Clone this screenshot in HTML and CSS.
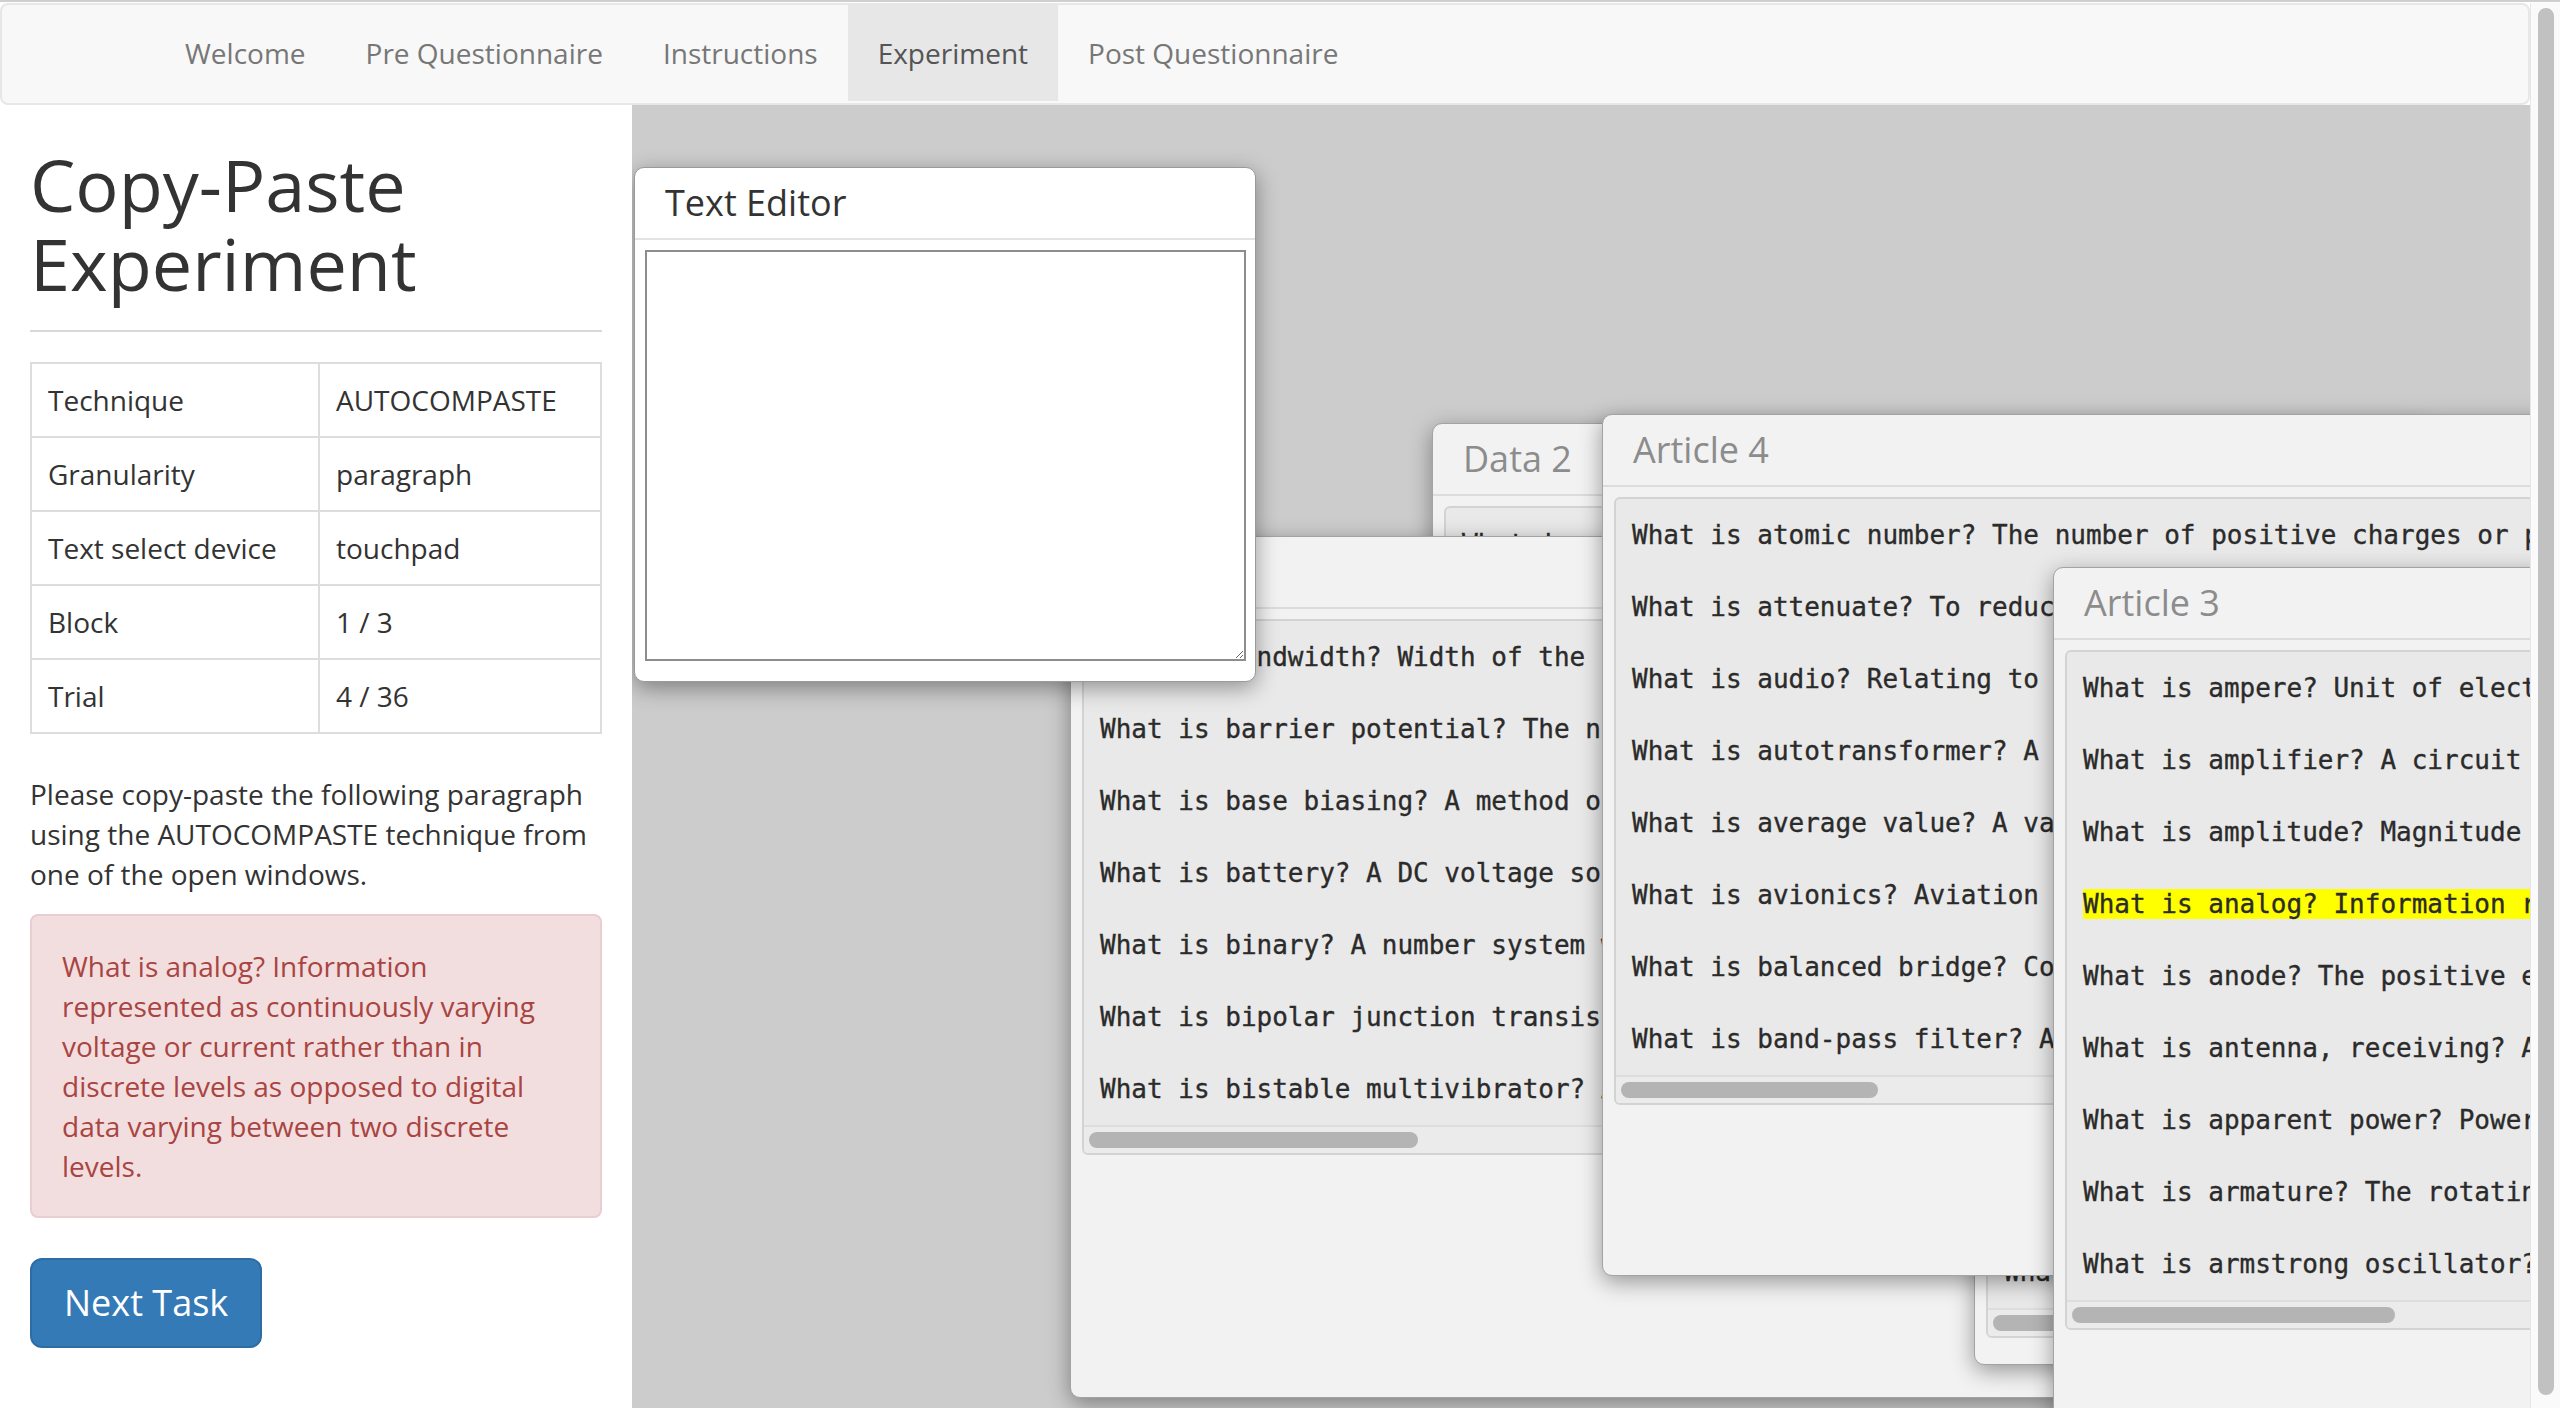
FILE: index.html
```html
<!DOCTYPE html>
<html lang="en">
<head>
<meta charset="utf-8">
<title>Copy-Paste Experiment</title>
<link rel="stylesheet" href="styles.css">
</head>
<body>
<div class="topline"></div>
<div class="frame">
  <div class="page">
    <nav class="navbar">
      <ul class="nav">
        <li><a>Welcome</a></li>
        <li><a>Pre Questionnaire</a></li>
        <li><a>Instructions</a></li>
        <li class="active"><a>Experiment</a></li>
        <li><a>Post Questionnaire</a></li>
      </ul>
    </nav>
    <div class="content">
      <aside class="sidebar">
        <div class="page-header"><h1>Copy-Paste Experiment</h1></div>
        <table class="info">
          <colgroup><col class="c1"><col></colgroup>
          <tr><td>Technique</td><td>AUTOCOMPASTE</td></tr>
          <tr><td>Granularity</td><td>paragraph</td></tr>
          <tr><td>Text select device</td><td>touchpad</td></tr>
          <tr><td>Block</td><td>1 / 3</td></tr>
          <tr><td>Trial</td><td>4 / 36</td></tr>
        </table>
        <p class="instr">Please copy-paste the following paragraph using the AUTOCOMPASTE technique from one of the open windows.</p>
        <div class="alert">What is analog? Information represented as continuously varying voltage or current rather than in discrete levels as opposed to digital data varying between two discrete levels.</div>
        <button class="btn">Next Task</button>
      </aside>
      <main class="canvas">
        <section class="win w-data2">
          <header class="win-head">Data 2</header>
          <div class="win-body">
            <div class="lines">
              <div>What is alternating current? Current that reverses direction periodically.</div>
              <div>What is alternator? An AC generator.</div>
              <div>What is ambient temperature? The temperature of the surrounding air.</div>
              <div>What is ammeter? A meter used to measure current.</div>
              <div>What is ampere-hour? A unit of battery capacity.</div>
              <div>What is ampere-turn? A unit of magnetomotive force.</div>
              <div>What is analog meter? A meter with a moving pointer.</div>
              <div>What is AND gate? A basic digital logic gate.</div>
            </div>
            <div class="hscroll"><div class="thumb" style="width:300px"></div></div>
          </div>
        </section>

        <section class="win w-data1">
          <header class="win-head">Data 1</header>
          <div class="win-body">
            <div class="lines">
              <div>What is bandwidth? Width of the range (or band) of frequencies that are used for transmitting a signal.</div>
              <div>What is barrier potential? The natural difference of potential that exists across a PN junction.</div>
              <div>What is base biasing? A method of biasing a transistor in which the bias voltage is supplied to the base.</div>
              <div>What is battery? A DC voltage source consisting of two or more cells.</div>
              <div>What is binary? A number system with a base of two, using the digits 0 and 1.</div>
              <div>What is bipolar junction transistor? A three-terminal semiconductor device.</div>
              <div>What is bistable multivibrator? A circuit with two stable states.</div>
            </div>
            <div class="hscroll"><div class="thumb" style="width:329px"></div></div>
          </div>
        </section>

        <section class="win w-x">
          <header class="win-head">Article 1</header>
          <div class="win-body">
            <div class="lines">
              <div>What is absolute zero? The lowest possible temperature.</div>
              <div>What is AC? Alternating current.</div>
              <div>What is acceptor? An impurity atom that accepts electrons.</div>
              <div>What is active filter? A filter that uses amplifying elements.</div>
              <div>What is admittance? The reciprocal of impedance.</div>
              <div>What is air core? A coil wound on a nonmagnetic form.</div>
              <div>What is alkaline cell? A primary cell with an alkaline electrolyte.</div>
              <div>What is alpha? The current gain of a common base amplifier.</div>
              <div>What is alternation? One half of a cycle.</div>
              <div>What is AM? Amplitude modulation.</div>
            </div>
            <div class="hscroll"><div class="thumb" style="width:330px"></div></div>
          </div>
        </section>

        <section class="win w-art4">
          <header class="win-head">Article 4</header>
          <div class="win-body">
            <div class="lines">
              <div>What is atomic number? The number of positive charges or protons in the nucleus of an atom.</div>
              <div>What is attenuate? To reduce in amplitude an action or signal.</div>
              <div>What is audio? Relating to sound or its reproduction.</div>
              <div>What is autotransformer? A transformer with a single winding.</div>
              <div>What is average value? A value obtained by dividing the sum of quantities by their number.</div>
              <div>What is avionics? Aviation electronics.</div>
              <div>What is balanced bridge? Condition that exists when the output voltage is zero.</div>
              <div>What is band-pass filter? A tuned circuit designed to pass a band of frequencies.</div>
            </div>
            <div class="hscroll"><div class="thumb" style="width:257px"></div></div>
          </div>
        </section>

        <section class="win w-art3">
          <header class="win-head">Article 3</header>
          <div class="win-body">
            <div class="lines">
              <div>What is ampere? Unit of electric current.</div>
              <div>What is amplifier? A circuit that increases the amplitude of the input signal.</div>
              <div>What is amplitude? Magnitude of a signal.</div>
              <div><span class="hl">What is analog? Information represented as continuously varying voltage or current rather than in discrete levels as opposed to digital data varying between two discrete levels.</span></div>
              <div>What is anode? The positive electrode of a device.</div>
              <div>What is antenna, receiving? A device for converting radio waves into electrical signals.</div>
              <div>What is apparent power? Power value obtained in an AC circuit.</div>
              <div>What is armature? The rotating part of a generator or motor.</div>
              <div>What is armstrong oscillator? A type of LC tuned oscillator.</div>
            </div>
            <div class="hscroll"><div class="thumb" style="width:323px"></div></div>
          </div>
        </section>

        <section class="win win-editor">
          <header class="win-head">Text Editor</header>
          <textarea class="editor"></textarea>
        </section>
      </main>
    </div>
  </div>
  <div class="vscroll"><div class="vthumb"></div></div>
</div>
</body>
</html>
```

FILE: styles.css
```css
* { box-sizing: border-box; }

html, body {
  margin: 0;
  padding: 0;
}

body {
  width: 2560px;
  height: 1408px;
  overflow: hidden;
  background: #ffffff;
  font-family: "Open Sans", "Liberation Sans", sans-serif;
  font-size: 28px;
  line-height: 40px;
  color: #333333;
}

.topline {
  height: 2px;
  background: #cfcfcf;
  margin-bottom: 1px;
}

.frame {
  display: flex;
  height: 1405px;
}

.page {
  flex: 1;
  display: flex;
  flex-direction: column;
  min-width: 0;
}

/* ---------- navbar ---------- */
.navbar {
  height: 102px;
  flex: none;
  background: #f8f8f8;
  border: 2px solid #e7e7e7;
  border-radius: 8px;
}

.nav {
  list-style: none;
  margin: 0;
  padding: 0 0 0 153px;
  display: flex;
  height: 98px;
}

.nav li a {
  display: block;
  padding: 0 30px;
  line-height: 96px;
  font-size: 28px;
  color: #777777;
}

.nav li.active a {
  background: #e7e7e7;
  color: #555555;
}

/* ---------- layout ---------- */
.content {
  flex: 1;
  display: flex;
  min-height: 0;
}

.sidebar {
  width: 632px;
  flex: none;
  padding: 0 30px;
  background: #ffffff;
}

.page-header {
  padding-bottom: 27px;
  border-bottom: 2px solid #d9d9d9;
}

.page-header h1 {
  margin: 40px 0 0;
  font-size: 72px;
  line-height: 79px;
  font-weight: 400;
  color: #333333;
}

.info {
  margin-top: 30px;
  width: 100%;
  border-collapse: collapse;
  table-layout: fixed;
  border: 2px solid #dddddd;
}

.info .c1 { width: 288px; }

.info td {
  border: 2px solid #dddddd;
  padding: 16px;
  line-height: 40px;
  white-space: nowrap;
}

.instr {
  margin: 40px 0 20px;
}

.alert {
  padding: 30px;
  border: 2px solid #ebccd1;
  border-radius: 8px;
  background: #f2dede;
  color: #a94442;
  margin-bottom: 40px;
}

.btn {
  font-family: "Open Sans", "Liberation Sans", sans-serif;
  font-size: 36px;
  line-height: 48px;
  padding: 19px 32px;
  color: #ffffff;
  background: #337ab7;
  border: 2px solid #2e6da4;
  border-radius: 12px;
}

/* ---------- canvas with windows ---------- */
.canvas {
  flex: 1;
  position: relative;
  overflow: hidden;
  background: #cccccc;
}

.win {
  position: absolute;
  width: 1000px;
  height: 862px;
  display: flex;
  flex-direction: column;
  background: #f2f2f2;
  border: 1px solid #a3a3a3;
  border-radius: 10px;
  box-shadow: 0 6px 22px rgba(0, 0, 0, 0.38);
  overflow: hidden;
}

.win-head {
  flex: none;
  height: 72px;
  padding-left: 30px;
  border-bottom: 2px solid #dcdcdc;
  font-family: "Open Sans", "Liberation Sans", sans-serif;
  font-size: 36px;
  line-height: 69px;
  color: #8c8c8c;
}

.win-body {
  flex: none;
  margin: 10px 11px 0;
  border: 2px solid #d3d3d3;
  border-radius: 6px;
  background: #e9e9e9;
  overflow: hidden;
}

.lines {
  padding-left: 16px;
  font-family: "DejaVu Sans Mono", "Liberation Mono", monospace;
  font-size: 26px;
  line-height: 72px;
  color: #2b2b2b;
  -webkit-text-stroke: 0.35px #2b2b2b;
  white-space: nowrap;
}

.hl { background: #ffff00; }

.hscroll {
  height: 28px;
  border-top: 2px solid #dddddd;
  background: #ebebeb;
  display: flex;
  align-items: center;
  padding-left: 5px;
}

.thumb {
  height: 16px;
  border-radius: 8px;
  background: #b4b4b4;
}

.w-data2 { left: 800px; top: 318px; }
.w-data1 { left: 438px; top: 431px; }
.w-x     { left: 1342px; top: 398px; }
.w-art4  { left: 970px; top: 309px; }
.w-art3  { left: 1421px; top: 462px; }

.win-editor {
  left: 2px;
  top: 62px;
  width: 622px;
  height: 515px;
  background: #ffffff;
  border-color: #9a9a9a;
}

.win-editor .win-head {
  color: #333333;
  border-bottom-color: #e3e3e3;
}

.editor {
  flex: none;
  display: block;
  margin: 10px 0 0 10px;
  width: 601px;
  height: 411px;
  border: 2px solid #8d8d8d;
  background: #ffffff;
  resize: both;
  outline: none;
}

/* ---------- page scrollbar ---------- */
.vscroll {
  width: 30px;
  flex: none;
  background: #fafafa;
  border-left: 1px solid #e6e6e6;
  padding: 5px 0 13px 7px;
}

.vthumb {
  width: 16px;
  height: 100%;
  border-radius: 8px;
  background: #c1c1c1;
}
```
